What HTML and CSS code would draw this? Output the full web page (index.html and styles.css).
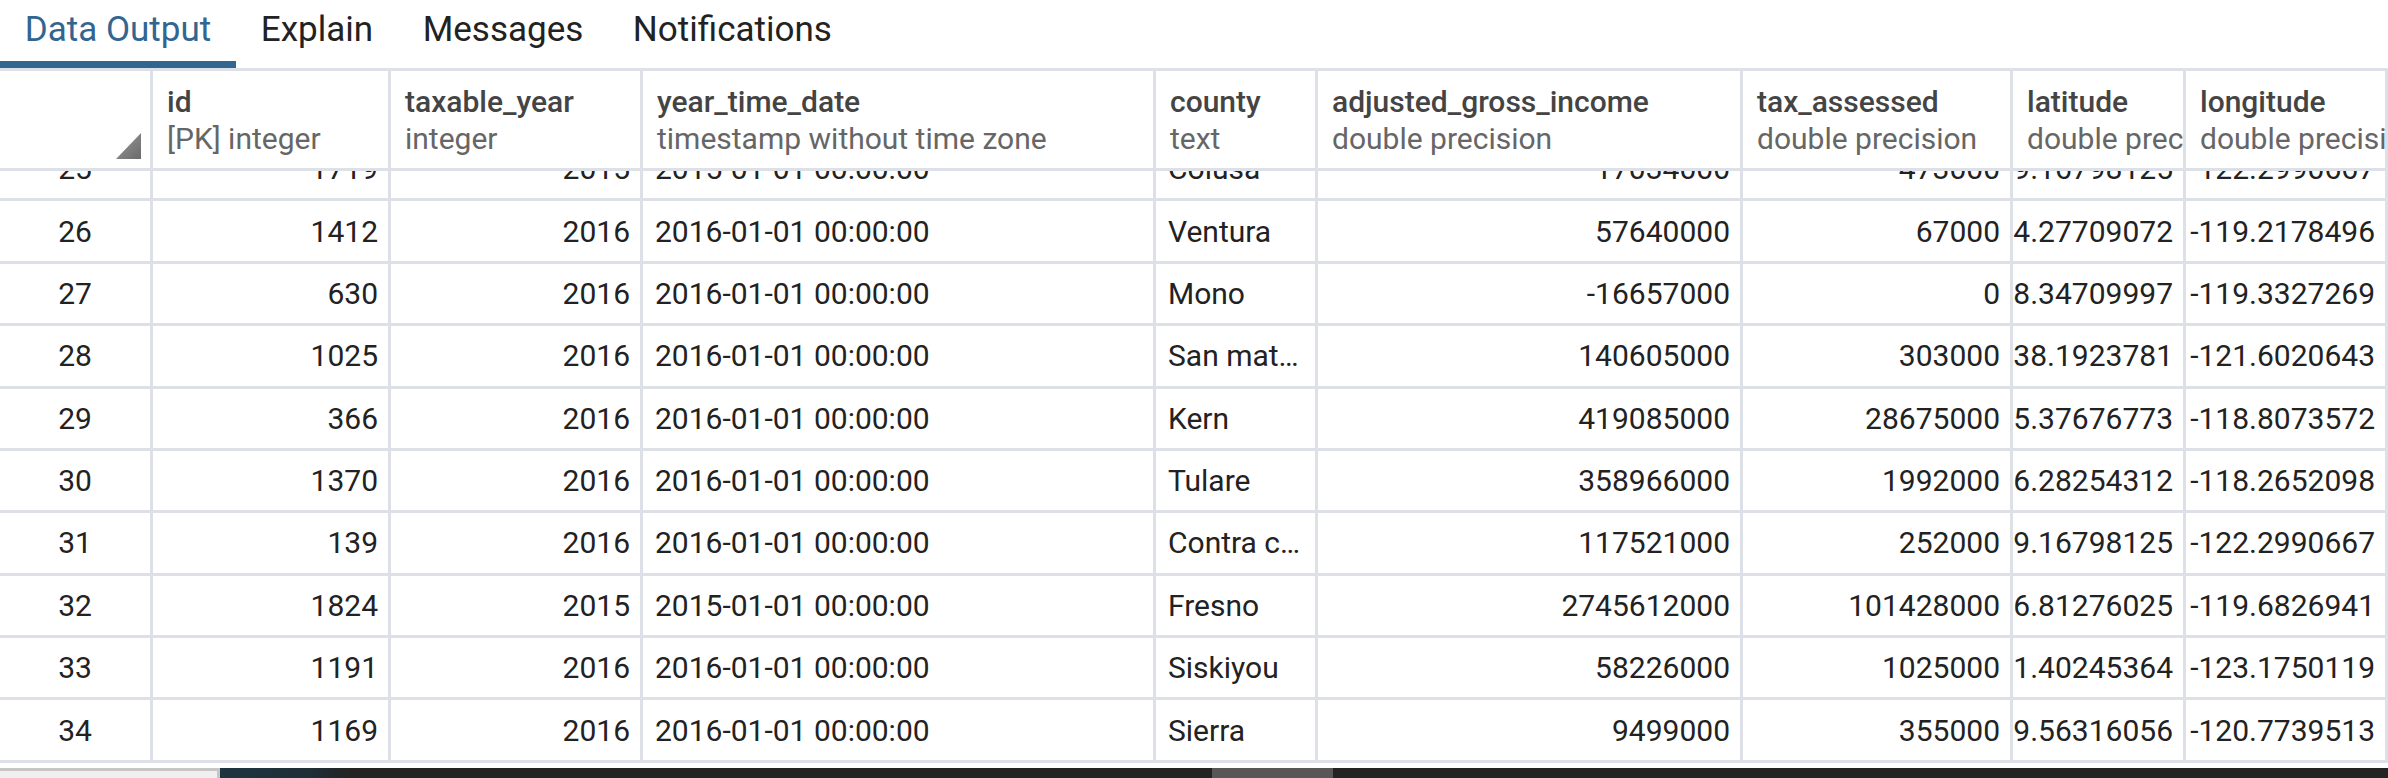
FILE: index.html
```html
<!DOCTYPE html>
<html>
<head>
<meta charset="utf-8">
<link rel="stylesheet" href="styles.css">
</head>
<body>
<div class="tabs">
  <div class="tab active">Data Output</div>
  <div class="tab">Explain</div>
  <div class="tab">Messages</div>
  <div class="tab">Notifications</div>
</div>
<div class="grid">
  <div class="cols head">
    <div class="hcell corner"><svg class="tri" width="25" height="26" viewBox="0 0 25 26"><defs><linearGradient id="tg" x1="0" y1="0" x2="1" y2="1"><stop offset="0" stop-color="#9a9a9a"/><stop offset="1" stop-color="#6a6a6a"/></linearGradient></defs><polygon points="25,0 25,26 0,26" fill="url(#tg)"/></svg></div>
    <div class="hcell"><div class="hname">id</div><div class="htype">[PK] integer</div></div>
    <div class="hcell"><div class="hname">taxable_year</div><div class="htype">integer</div></div>
    <div class="hcell"><div class="hname">year_time_date</div><div class="htype">timestamp without time zone</div></div>
    <div class="hcell"><div class="hname">county</div><div class="htype">text</div></div>
    <div class="hcell"><div class="hname">adjusted_gross_income</div><div class="htype">double precision</div></div>
    <div class="hcell"><div class="hname">tax_assessed</div><div class="htype">double precision</div></div>
    <div class="hcell"><div class="hname">latitude</div><div class="htype">double precision</div></div>
    <div class="hcell"><div class="hname">longitude</div><div class="htype">double precision</div></div>
  </div>
  <div class="viewport">
    <div class="rows">
      <div class="cols row">
        <div class="cell num">25</div><div class="cell r"><span>1719</span></div><div class="cell r"><span>2015</span></div><div class="cell l"><span>2015-01-01 00:00:00</span></div><div class="cell l"><span>Colusa</span></div><div class="cell r"><span>17034000</span></div><div class="cell r"><span>473000</span></div><div class="cell r"><span>39.16798125</span></div><div class="cell r"><span>-122.2990667</span></div>
      </div>
      <div class="cols row">
        <div class="cell num">26</div><div class="cell r"><span>1412</span></div><div class="cell r"><span>2016</span></div><div class="cell l"><span>2016-01-01 00:00:00</span></div><div class="cell l"><span>Ventura</span></div><div class="cell r"><span>57640000</span></div><div class="cell r"><span>67000</span></div><div class="cell r"><span>34.27709072</span></div><div class="cell r"><span>-119.2178496</span></div>
      </div>
      <div class="cols row">
        <div class="cell num">27</div><div class="cell r"><span>630</span></div><div class="cell r"><span>2016</span></div><div class="cell l"><span>2016-01-01 00:00:00</span></div><div class="cell l"><span>Mono</span></div><div class="cell r"><span>-16657000</span></div><div class="cell r"><span>0</span></div><div class="cell r"><span>38.34709997</span></div><div class="cell r"><span>-119.3327269</span></div>
      </div>
      <div class="cols row">
        <div class="cell num">28</div><div class="cell r"><span>1025</span></div><div class="cell r"><span>2016</span></div><div class="cell l"><span>2016-01-01 00:00:00</span></div><div class="cell l"><span>San mateo</span></div><div class="cell r"><span>140605000</span></div><div class="cell r"><span>303000</span></div><div class="cell r"><span>38.1923781</span></div><div class="cell r"><span>-121.6020643</span></div>
      </div>
      <div class="cols row">
        <div class="cell num">29</div><div class="cell r"><span>366</span></div><div class="cell r"><span>2016</span></div><div class="cell l"><span>2016-01-01 00:00:00</span></div><div class="cell l"><span>Kern</span></div><div class="cell r"><span>419085000</span></div><div class="cell r"><span>28675000</span></div><div class="cell r"><span>35.37676773</span></div><div class="cell r"><span>-118.8073572</span></div>
      </div>
      <div class="cols row">
        <div class="cell num">30</div><div class="cell r"><span>1370</span></div><div class="cell r"><span>2016</span></div><div class="cell l"><span>2016-01-01 00:00:00</span></div><div class="cell l"><span>Tulare</span></div><div class="cell r"><span>358966000</span></div><div class="cell r"><span>1992000</span></div><div class="cell r"><span>36.28254312</span></div><div class="cell r"><span>-118.2652098</span></div>
      </div>
      <div class="cols row">
        <div class="cell num">31</div><div class="cell r"><span>139</span></div><div class="cell r"><span>2016</span></div><div class="cell l"><span>2016-01-01 00:00:00</span></div><div class="cell l"><span>Contra costa</span></div><div class="cell r"><span>117521000</span></div><div class="cell r"><span>252000</span></div><div class="cell r"><span>39.16798125</span></div><div class="cell r"><span>-122.2990667</span></div>
      </div>
      <div class="cols row">
        <div class="cell num">32</div><div class="cell r"><span>1824</span></div><div class="cell r"><span>2015</span></div><div class="cell l"><span>2015-01-01 00:00:00</span></div><div class="cell l"><span>Fresno</span></div><div class="cell r"><span>2745612000</span></div><div class="cell r"><span>101428000</span></div><div class="cell r"><span>36.81276025</span></div><div class="cell r"><span>-119.6826941</span></div>
      </div>
      <div class="cols row">
        <div class="cell num">33</div><div class="cell r"><span>1191</span></div><div class="cell r"><span>2016</span></div><div class="cell l"><span>2016-01-01 00:00:00</span></div><div class="cell l"><span>Siskiyou</span></div><div class="cell r"><span>58226000</span></div><div class="cell r"><span>1025000</span></div><div class="cell r"><span>41.40245364</span></div><div class="cell r"><span>-123.1750119</span></div>
      </div>
      <div class="cols row">
        <div class="cell num">34</div><div class="cell r"><span>1169</span></div><div class="cell r"><span>2016</span></div><div class="cell l"><span>2016-01-01 00:00:00</span></div><div class="cell l"><span>Sierra</span></div><div class="cell r"><span>9499000</span></div><div class="cell r"><span>355000</span></div><div class="cell r"><span>39.56316056</span></div><div class="cell r"><span>-120.7739513</span></div>
      </div>
    </div>
  </div>
</div>
<div class="hscroll">
  <div class="hs-left"></div>
  <div class="hs-track"><div class="hs-thumb"></div></div>
</div>
</body>
</html>
```
FILE: styles.css
```css
:root {
  --line: #dde0e6;
}
* {
  box-sizing: border-box;
}
html, body {
  margin: 0;
  padding: 0;
  height: 778px;
  overflow: hidden;
  background: #fff;
}
body {
  width: 2388px;
  font-family: Roboto, "Noto Sans", "Liberation Sans", sans-serif;
}
.tabs {
  display: flex;
  height: 68px;
}
.tab {
  padding: 9px 24.8px 11px;
  font-size: 35px;
  line-height: 41px;
  color: #222;
  border-bottom: 7px solid transparent;
  white-space: nowrap;
}
.tab.active {
  color: #326690;
  border-bottom-color: #326690;
}
.grid {
  border-top: 3px solid var(--line);
}
.cols {
  display: grid;
  grid-template-columns: 153px 238px 252px 513px 162px 425px 270px 173px 202px;
}
.head {
  height: 100px;
}
.hcell {
  border-right: 3px solid var(--line);
  border-bottom: 3px solid var(--line);
  padding: 12px 0 0 14px;
  overflow: hidden;
  white-space: nowrap;
  font-size: 30px;
  line-height: 37px;
}
.hname {
  font-weight: 500;
  color: #444;
}
.htype {
  color: #666;
}
.corner {
  display: flex;
  justify-content: flex-end;
  align-items: flex-end;
  padding: 0 9px 9px 0;
}
.tri {
  display: block;
}
.viewport {
  height: 597px;
  overflow: hidden;
}
.rows {
  margin-top: -32px;
}
.row {
  height: 62.375px;
}
.cell {
  border-right: 3px solid var(--line);
  border-bottom: 3px solid var(--line);
  display: flex;
  align-items: center;
  overflow: hidden;
  white-space: nowrap;
  font-size: 30px;
  color: #222;
}
.num {
  justify-content: center;
}
.r {
  justify-content: flex-end;
  padding-right: 10px;
}
.r span {
  flex-shrink: 0;
}
.l {
  padding: 0 4px 0 12px;
}
.l span {
  overflow: hidden;
  text-overflow: ellipsis;
  min-width: 0;
}
.hscroll {
  display: flex;
  height: 10px;
}
.hs-left {
  width: 220px;
  background: #f0f0f0;
  border-top: 3px solid #c6c6c6;
  border-right: 3px solid #c6c6c6;
}
.hs-track {
  flex: 1;
  padding-left: 992px;
  background: linear-gradient(90deg, #1d3541 0, #1f2e37 90px, #232323 130px);
}
.hs-thumb {
  width: 121px;
  height: 100%;
  background: #575757;
}
```
